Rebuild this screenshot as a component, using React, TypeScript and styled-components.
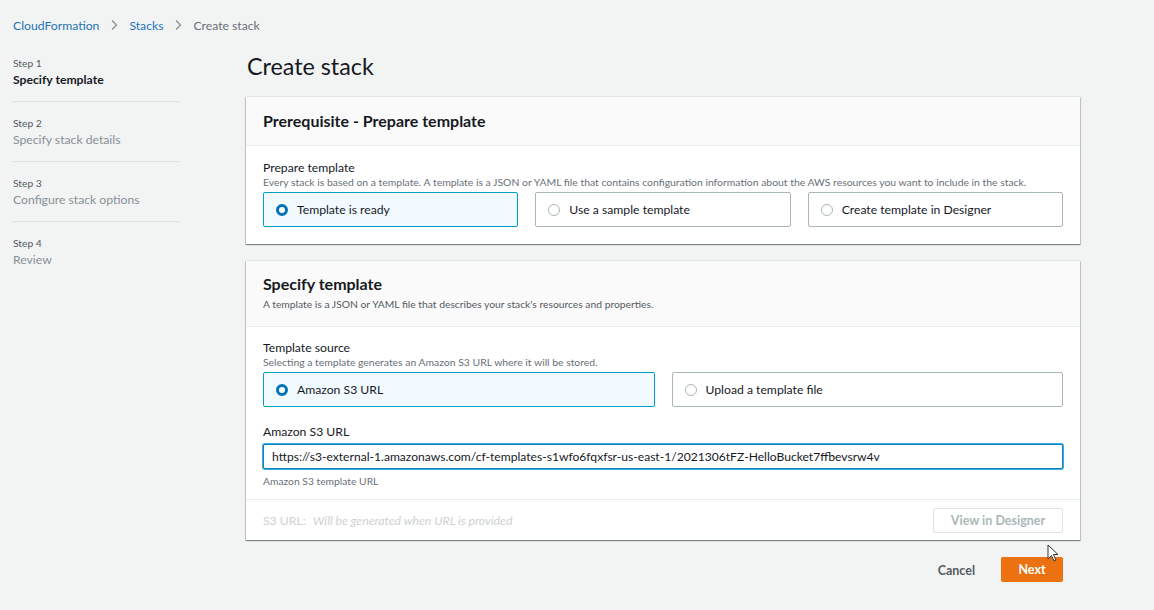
import React from "react";
import styled, { createGlobalStyle } from "styled-components";

const Global = createGlobalStyle`
  html, body { margin: 0; padding: 0; background: #f2f3f3; }
  body { font-family: Lato, "Open Sans", Arial, sans-serif; color: #16191f; }
  * { box-sizing: border-box; }
`;

const Page = styled.div`
  position: relative;
  width: 1154px;
  height: 610px;
  overflow: hidden;
  background: #f2f3f3;
  padding: 16px 0 0 13px;
`;

const Crumbs = styled.nav`
  display: flex;
  align-items: center;
  gap: 10px;
  font-size: 12.2px;
  height: 18px;
`;

const CrumbLink = styled.span`
  color: #1f73b7;
`;

const CrumbCurrent = styled.span`
  color: #687078;
`;

const Chevron = styled.svg`
  width: 10px;
  height: 12px;
`;

const Body = styled.div`
  display: flex;
  margin-top: 18px;
`;

const Side = styled.aside`
  width: 166px;
  flex: none;
`;

const StepItem = styled.div<{ $first?: boolean; $last?: boolean }>`
  padding: ${(p) => (p.$first ? "3px" : "13px")} 0 12px;
  border-bottom: ${(p) => (p.$last ? "none" : "1px solid #dfe2e4")};
`;

const StepNum = styled.div`
  font-size: 10.3px;
  color: #545b64;
  line-height: 16px;
`;

const StepLabel = styled.div<{ $active?: boolean }>`
  font-size: 12.2px;
  line-height: 18px;
  color: ${(p) => (p.$active ? "#16191f" : "#879196")};
  font-weight: ${(p) => (p.$active ? 700 : 400)};
`;

const Main = styled.main`
  margin-left: 67px;
  width: 834px;
`;

const Title = styled.h1`
  margin: -1px 0 0 1px;
  font-size: 23.3px;
  font-weight: 400;
  line-height: 30px;
  color: #16191f;
`;

const Panel = styled.section<{ $mt: number }>`
  margin-top: ${(p) => p.$mt}px;
  background: #fff;
  box-shadow: 0 0 0 1px rgba(0, 28, 36, 0.06), 0 1px 1px 0 rgba(0, 28, 36, 0.3), 1px 1px 1px 0 rgba(0, 28, 36, 0.12), -1px 1px 1px 0 rgba(0, 28, 36, 0.12);
`;

const PanelHeader = styled.header<{ $h: number; $pt: number }>`
  height: ${(p) => p.$h}px;
  background: #fafafa;
  border-bottom: 1px solid #eaeded;
  padding: ${(p) => p.$pt}px 17px 0;
`;

const PanelTitle = styled.h2`
  margin: 0;
  font-size: 16px;
  font-weight: 700;
  line-height: 22px;
  color: #16191f;
`;

const PanelDesc = styled.div`
  font-size: 10.3px;
  color: #545b64;
  line-height: 16px;
  margin-top: 1px;
`;

const PanelBody = styled.div<{ $pt: number; $pb: number }>`
  padding: ${(p) => p.$pt}px 17px ${(p) => p.$pb}px;
`;

const FieldLabel = styled.div`
  font-size: 12.2px;
  line-height: 15px;
  color: #16191f;
`;

const FieldDesc = styled.div`
  font-size: 10.4px;
  line-height: 15px;
  color: #687078;
`;

const Tiles = styled.div<{ $cols: number }>`
  display: grid;
  grid-template-columns: repeat(${(p) => p.$cols}, 1fr);
  gap: 17px;
  margin-top: 2px;
`;

const Tile = styled.div<{ $on?: boolean }>`
  height: 35px;
  border: 1px solid ${(p) => (p.$on ? "#00a1c9" : "#aab7b8")};
  background: ${(p) => (p.$on ? "#f1faff" : "#fff")};
  border-radius: 2px;
  display: flex;
  align-items: center;
  padding-left: 12px;
  gap: 9px;
  font-size: 12.2px;
  color: #16191f;
`;

const Radio = styled.span<{ $on?: boolean }>`
  width: 12px;
  height: 12px;
  border-radius: 50%;
  flex: none;
  border: ${(p) => (p.$on ? "3.5px solid #0073bb" : "1px solid #aab7b8")};
  background: #fff;
`;

const InputLabel = styled.div`
  font-size: 12.2px;
  line-height: 16px;
  margin-top: 17px;
  color: #16191f;
`;

const UrlInput = styled.div`
  margin-top: 4px;
  height: 25px;
  border: 1px solid #0a84c6;
  box-shadow: 0 0 0 1px #3fa9d8;
  border-radius: 2px;
  display: flex;
  align-items: center;
  padding-left: 8px;
  font-size: 12.1px;
  color: #16191f;
  background: #fff;
`;

const Hint = styled.div`
  font-size: 10.3px;
  line-height: 14px;
  color: #687078;
  margin-top: 5px;
`;

const PanelFooter = styled.footer`
  border-top: 1px solid #eaeded;
  height: 41px;
  padding: 0 17px;
  display: flex;
  align-items: center;
  justify-content: space-between;
`;

const S3Line = styled.div`
  font-size: 12.2px;
  color: #cdd1d2;
  display: flex;
  gap: 7px;
`;

const S3Val = styled.span`
  font-style: italic;
`;

const GhostButton = styled.div`
  width: 130px;
  height: 25px;
  border: 1px solid #dfe2e4;
  border-radius: 2px;
  display: flex;
  align-items: center;
  justify-content: center;
  font-size: 12.5px;
  font-weight: 700;
  color: #aab7b8;
  margin-top: 1px;
`;

const Actions = styled.div`
  display: flex;
  justify-content: flex-end;
  align-items: center;
  margin-top: 17px;
  padding-right: 17px;
  gap: 26px;
`;

const LinkButton = styled.div`
  font-size: 12.5px;
  font-weight: 700;
  color: #545b64;
  margin-top: 2px;
`;

const PrimaryButton = styled.div`
  width: 62px;
  height: 25px;
  background: #ec7211;
  border-radius: 2px;
  color: #fff;
  font-size: 12.5px;
  font-weight: 700;
  display: flex;
  align-items: center;
  justify-content: center;
`;

const Cursor = styled.svg`
  position: absolute;
  left: 1047px;
  top: 544px;
`;

const Chev = () => (
  <Chevron viewBox="0 0 10 12">
    <path d="M3 1.5 L7.5 6 L3 10.5" fill="none" stroke="#8a9196" strokeWidth="1.3" />
  </Chevron>
);

export default function App() {
  return (
    <>
      <Global />
      <Page>
        <Crumbs>
          <CrumbLink>CloudFormation</CrumbLink>
          <Chev />
          <CrumbLink>Stacks</CrumbLink>
          <Chev />
          <CrumbCurrent>Create stack</CrumbCurrent>
        </Crumbs>
        <Body>
          <Side>
            <StepItem $first>
              <StepNum>Step 1</StepNum>
              <StepLabel $active>Specify template</StepLabel>
            </StepItem>
            <StepItem>
              <StepNum>Step 2</StepNum>
              <StepLabel>Specify stack details</StepLabel>
            </StepItem>
            <StepItem>
              <StepNum>Step 3</StepNum>
              <StepLabel>Configure stack options</StepLabel>
            </StepItem>
            <StepItem $last>
              <StepNum>Step 4</StepNum>
              <StepLabel>Review</StepLabel>
            </StepItem>
          </Side>
          <Main>
            <Title>Create stack</Title>
            <Panel $mt={16}>
              <PanelHeader $h={49} $pt={13}>
                <PanelTitle>Prerequisite - Prepare template</PanelTitle>
              </PanelHeader>
              <PanelBody $pt={14} $pb={17}>
                <FieldLabel>Prepare template</FieldLabel>
                <FieldDesc>
                  Every stack is based on a template. A template is a JSON or YAML file that contains configuration information about the AWS resources you want to include in the stack.
                </FieldDesc>
                <Tiles $cols={3}>
                  <Tile $on>
                    <Radio $on />
                    Template is ready
                  </Tile>
                  <Tile>
                    <Radio />
                    Use a sample template
                  </Tile>
                  <Tile>
                    <Radio />
                    Create template in Designer
                  </Tile>
                </Tiles>
              </PanelBody>
            </Panel>
            <Panel $mt={17}>
              <PanelHeader $h={66} $pt={12}>
                <PanelTitle>Specify template</PanelTitle>
                <PanelDesc>A template is a JSON or YAML file that describes your stack's resources and properties.</PanelDesc>
              </PanelHeader>
              <PanelBody $pt={13} $pb={11}>
                <FieldLabel>Template source</FieldLabel>
                <FieldDesc>Selecting a template generates an Amazon S3 URL where it will be stored.</FieldDesc>
                <Tiles $cols={2}>
                  <Tile $on>
                    <Radio $on />
                    Amazon S3 URL
                  </Tile>
                  <Tile>
                    <Radio />
                    Upload a template file
                  </Tile>
                </Tiles>
                <InputLabel>Amazon S3 URL</InputLabel>
                <UrlInput>
                  https://s3-external-1.amazonaws.com/cf-templates-s1wfo6fqxfsr-us-east-1/2021306tFZ-HelloBucket7ffbevsrw4v
                </UrlInput>
                <Hint>Amazon S3 template URL</Hint>
              </PanelBody>
              <PanelFooter>
                <S3Line>
                  <span>S3 URL:</span>
                  <S3Val>Will be generated when URL is provided</S3Val>
                </S3Line>
                <GhostButton>View in Designer</GhostButton>
              </PanelFooter>
            </Panel>
            <Actions>
              <LinkButton>Cancel</LinkButton>
              <PrimaryButton>Next</PrimaryButton>
            </Actions>
          </Main>
        </Body>
        <Cursor width="14" height="20" viewBox="0 0 14 20">
          <path d="M1 1 L1 15 L4.5 11.5 L7 17 L9 16 L6.5 10.5 L11 10.5 Z" fill="#fff" stroke="#333" strokeWidth="1" />
        </Cursor>
      </Page>
    </>
  );
}
